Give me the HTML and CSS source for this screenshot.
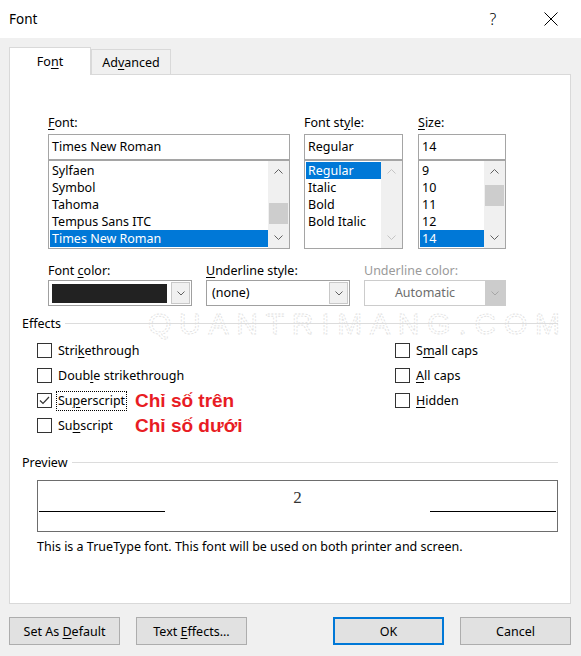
FILE: index.html
```html
<!DOCTYPE html>
<html>
<head>
<meta charset="utf-8">
<link rel="stylesheet" href="styles.css">
</head>
<body>
<div class="dialog">
  <div class="titlebar">
    <span class="title">Font</span>
    <span class="help">?</span>
    <span class="close"><svg width="14" height="14" viewBox="0 0 14 14"><path d="M0.5 0.5 L13.5 13.5 M13.5 0.5 L0.5 13.5" stroke="#000" stroke-width="1" fill="none"/></svg></span>
  </div>

  <div class="tabs">
    <div class="tab active"><span>Fo<u>n</u>t</span></div>
    <div class="tab"><span>Ad<u>v</u>anced</span></div>
  </div>

  <div class="panel">
    <svg class="watermark" width="420" height="30" viewBox="0 0 420 30">
      <text x="2" y="28" textLength="412" lengthAdjust="spacing">QUANTRIMANG.COM</text>
    </svg>

    <div class="fontrow">
      <div class="col c-font">
        <div class="lbl"><u>F</u>ont:</div>
        <div class="input">Times New Roman</div>
        <div class="list">
          <div class="items">
            <div class="item">Sylfaen</div>
            <div class="item">Symbol</div>
            <div class="item">Tahoma</div>
            <div class="item">Tempus Sans ITC</div>
            <div class="item sel">Times New Roman</div>
          </div>
          <div class="sb">
            <div class="sb-btn"><svg width="9" height="5" viewBox="0 0 9 5"><polyline points="0.5,4.5 4.5,0.5 8.5,4.5" fill="none" stroke="#606060"/></svg></div>
            <div class="sb-track"><div class="thumb thumb-font"></div></div>
            <div class="sb-btn"><svg width="9" height="5" viewBox="0 0 9 5"><polyline points="0.5,0.5 4.5,4.5 8.5,0.5" fill="none" stroke="#606060"/></svg></div>
          </div>
        </div>
      </div>

      <div class="col c-style">
        <div class="lbl">Font st<u>y</u>le:</div>
        <div class="input">Regular</div>
        <div class="list">
          <div class="items">
            <div class="item sel">Regular</div>
            <div class="item">Italic</div>
            <div class="item">Bold</div>
            <div class="item">Bold Italic</div>
          </div>
          <div class="sb">
            <div class="sb-btn"><svg width="9" height="5" viewBox="0 0 9 5"><polyline points="0.5,4.5 4.5,0.5 8.5,4.5" fill="none" stroke="#c4c4c4"/></svg></div>
            <div class="sb-track"></div>
            <div class="sb-btn"><svg width="9" height="5" viewBox="0 0 9 5"><polyline points="0.5,0.5 4.5,4.5 8.5,0.5" fill="none" stroke="#c4c4c4"/></svg></div>
          </div>
        </div>
      </div>

      <div class="col c-size">
        <div class="lbl"><u>S</u>ize:</div>
        <div class="input">14</div>
        <div class="list">
          <div class="items">
            <div class="item">9</div>
            <div class="item">10</div>
            <div class="item">11</div>
            <div class="item">12</div>
            <div class="item sel">14</div>
          </div>
          <div class="sb">
            <div class="sb-btn"><svg width="9" height="5" viewBox="0 0 9 5"><polyline points="0.5,4.5 4.5,0.5 8.5,4.5" fill="none" stroke="#606060"/></svg></div>
            <div class="sb-track"><div class="thumb thumb-size"></div></div>
            <div class="sb-btn"><svg width="9" height="5" viewBox="0 0 9 5"><polyline points="0.5,0.5 4.5,4.5 8.5,0.5" fill="none" stroke="#606060"/></svg></div>
          </div>
        </div>
      </div>
    </div>

    <div class="comborow">
      <div class="ccol c1">
        <div class="lbl">Font <u>c</u>olor:</div>
        <div class="combo">
          <div class="swatch"></div>
          <div class="dd"><svg width="8" height="5" viewBox="0 0 8 5"><polyline points="0.5,0.5 4,4 7.5,0.5" fill="none" stroke="#606060"/></svg></div>
        </div>
      </div>
      <div class="ccol c2">
        <div class="lbl"><u>U</u>nderline style:</div>
        <div class="combo">
          <div class="ctext">(none)</div>
          <div class="dd"><svg width="8" height="5" viewBox="0 0 8 5"><polyline points="0.5,0.5 4,4 7.5,0.5" fill="none" stroke="#606060"/></svg></div>
        </div>
      </div>
      <div class="ccol c3">
        <div class="lbl disabled">Underline color:</div>
        <div class="combo dis">
          <div class="ctext center">Automatic</div>
          <div class="dd"><svg width="8" height="5" viewBox="0 0 8 5"><polyline points="0.5,0.5 4,4 7.5,0.5" fill="none" stroke="#a6a6a6"/></svg></div>
        </div>
      </div>
    </div>

    <div class="ghead"><span>Effects</span><span class="rule"></span></div>

    <div class="effects">
      <div class="ecol left">
        <div class="erow"><span class="cb"></span><span class="elbl">Stri<u>k</u>ethrough</span></div>
        <div class="erow"><span class="cb"></span><span class="elbl">Doub<u>l</u>e strikethrough</span></div>
        <div class="erow"><span class="cb"><svg width="13" height="13" viewBox="0 0 13 13"><polyline points="2,6.5 5,9.5 11,3" fill="none" stroke="#333" stroke-width="1.2"/></svg></span><span class="elbl focus">Su<u>p</u>erscript</span><span class="red">Chỉ số trên</span></div>
        <div class="erow"><span class="cb"></span><span class="elbl">Su<u>b</u>script</span><span class="red">Chỉ số dưới</span></div>
      </div>
      <div class="ecol right">
        <div class="erow"><span class="cb"></span><span class="elbl">S<u>m</u>all caps</span></div>
        <div class="erow"><span class="cb"></span><span class="elbl"><u>A</u>ll caps</span></div>
        <div class="erow"><span class="cb"></span><span class="elbl"><u>H</u>idden</span></div>
      </div>
    </div>

    <div class="ghead preview-head"><span>Preview</span><span class="rule"></span></div>

    <div class="preview">
      <div class="pline"></div>
      <div class="pmid"><span class="sup">2</span></div>
      <div class="pline"></div>
    </div>

    <div class="note">This is a TrueType font. This font will be used on both printer and screen.</div>
  </div>

  <div class="buttons">
    <div class="btn"><span>Set As <u>D</u>efault</span></div>
    <div class="btn"><span>Text <u>E</u>ffects...</span></div>
    <div class="spacer"></div>
    <div class="btn ok"><span>OK</span></div>
    <div class="btn"><span>Cancel</span></div>
  </div>
</div>
</body>
</html>
```

FILE: styles.css
```css
* { box-sizing: border-box; }

body {
  margin: 0;
  background: #f0f0f0;
  font-family: "Noto Sans", "Open Sans", sans-serif;
  font-size: 12.5px;
  color: #000;
}

u { text-underline-offset: 2px; text-decoration-thickness: 1px; }

.dialog {
  width: 581px;
  height: 656px;
  overflow: hidden;
}

/* title bar */
.titlebar {
  height: 38px;
  background: #fff;
  display: flex;
  align-items: center;
  padding-left: 9px;
  padding-right: 23px;
}
.title { flex: 1; font-size: 13.5px; }
.help { width: 16px; text-align: center; font-size: 16px; font-weight: 300; margin-right: 43px; }
.close { width: 14px; height: 14px; display: flex; }

/* tabs */
.tabs {
  display: flex;
  align-items: flex-end;
  height: 27px;
  margin-top: 9px;
  padding-left: 9px;
  position: relative;
  z-index: 2;
}
.tab {
  height: 25px;
  width: 80px;
  border: 1px solid #d9d9d9;
  border-bottom: none;
  background: #f0f0f0;
  display: flex;
  align-items: center;
  justify-content: center;
  padding-top: 1px;
}
.tab.active {
  width: 82px;
  height: 28px;
  margin-bottom: -1px;
  background: #fff;
  padding-top: 0;
}

/* panel */
.panel {
  position: relative;
  margin-left: 9px;
  width: 562px;
  height: 530px;
  background: #fff;
  border: 1px solid #d9d9d9;
  z-index: 1;
}

.watermark {
  position: absolute;
  left: 136px;
  top: 231px;
  z-index: 0;
  overflow: visible;
}
.watermark text {
  font-family: "Liberation Sans", sans-serif;
  font-size: 30px;
  fill: none;
  stroke: #e0e0e0;
  stroke-width: 0.8;
  stroke-dasharray: 2 1.5;
}

.lbl { height: 17px; line-height: 17px; margin-bottom: 3px; white-space: nowrap; }
.lbl.disabled { color: #9a9a9a; }

.fontrow {
  display: flex;
  margin-top: 39px;
  padding-left: 38px;
  position: relative;
  z-index: 1;
}
.c-font { width: 242px; }
.c-style { width: 99px; margin-left: 14px; }
.c-size { width: 88px; margin-left: 15px; }

.input {
  height: 26px;
  border: 1px solid #a5a5a5;
  padding: 0 3px;
  line-height: 24px;
  background: #fff;
}
.list {
  height: 89px;
  border: 1px solid #a5a5a5;
  display: flex;
  padding: 1px 0 1px 1px;
  background: #fff;
}
.items { flex: 1; }
.item { height: 17px; line-height: 17px; padding-left: 2px; white-space: nowrap; }
.item.sel { background: #0078d7; color: #fff; }

.sb {
  width: 21px;
  background: #f0f0f0;
  display: flex;
  flex-direction: column;
  margin-top: -1px;
  margin-bottom: -1px;
}
.sb-btn { height: 21px; display: flex; align-items: center; justify-content: center; }
.sb-track { flex: 1; position: relative; }
.thumb { background: #cdcdcd; margin: 0 1px; height: 21px; }
.thumb-font { margin-top: 21px; }
.thumb-size { margin-top: 3px; }

/* combo row */
.comborow {
  display: flex;
  margin-top: 13px;
  padding-left: 38px;
  position: relative;
  z-index: 1;
}
.c1 { width: 144px; }
.c2 { width: 144px; margin-left: 14px; }
.c3 { width: 142px; margin-left: 14px; }
.comborow .lbl { margin-bottom: 1px; }

.combo {
  height: 26px;
  border: 1px solid #a0a0a0;
  display: flex;
  background: #fff;
}
.swatch { flex: 1; margin: 3px 3px 2px 3px; background: #222; }
.ctext { flex: 1; padding-left: 5px; line-height: 24px; }
.ctext.center { text-align: center; padding-left: 0; color: #6d6d6d; }
.dd {
  width: 19px;
  margin: 1px;
  border: 1px solid #c8c8c8;
  background: #f0f0f0;
  display: flex;
  align-items: center;
  justify-content: center;
}
.combo.dis { border-color: #cccccc; }
.combo.dis .dd { background: #cccccc; border-color: #cccccc; margin: 0; width: 20px; }

/* group header */
.ghead {
  display: flex;
  align-items: center;
  height: 17px;
  margin-top: 9px;
  padding: 0 12px;
  position: relative;
  z-index: 1;
}
.ghead .rule { flex: 1; height: 1px; background: #dcdcdc; margin-left: 4px; }
.preview-head { margin-top: 16px; }
.preview-head .rule { margin-left: 5px; }

/* effects */
.effects {
  display: grid;
  grid-template-columns: 358px auto;
  margin-top: 6px;
  padding-left: 27px;
  position: relative;
  z-index: 1;
}
.erow {
  height: 25px;
  display: grid;
  grid-template-columns: 15px 75px auto;
  column-gap: 4px;
  align-items: center;
}
.ecol.right .erow { grid-template-columns: 15px auto; column-gap: 6px; }
.cb {
  width: 15px;
  height: 15px;
  border: 1px solid #333;
  background: #fff;
  display: flex;
  align-items: center;
  justify-content: center;
}
.elbl {
  justify-self: start;
  white-space: nowrap;
  border: 1px dotted transparent;
  padding: 0 1px;
  line-height: 18px;
}
.ecol.right .elbl { padding: 0; border: none; }
.elbl.focus { border-color: #000; }
.red {
  font-family: "Liberation Sans", sans-serif;
  font-weight: bold;
  font-size: 19px;
  color: #e81c24;
  white-space: nowrap;
  line-height: 20px;
}

/* preview */
.preview {
  margin: 9px 12px 0 27px;
  height: 52px;
  border: 1px solid #6d6d6d;
  display: flex;
  align-items: flex-start;
  padding: 0 1px;
}
.pline { width: 126px; height: 1px; background: #000; margin-top: 30px; }
.pmid { flex: 1; text-align: center; margin-top: 8px; }
.sup { font-family: "Liberation Serif", serif; font-size: 17px; line-height: 17px; color: #333; }

.note { margin: 6px 0 0 27px; height: 17px; line-height: 17px; white-space: nowrap; }

/* buttons */
.buttons {
  display: flex;
  margin-top: 13px;
  padding-left: 9px;
}
.btn {
  width: 111px;
  height: 28px;
  background: #e1e1e1;
  border: 1px solid #adadad;
  display: flex;
  align-items: center;
  justify-content: center;
  margin-right: 16px;
}
.btn.ok { border: 2px solid #0078d7; }
.btn:last-child { margin-right: 0; }
.spacer { width: 70px; }
```
